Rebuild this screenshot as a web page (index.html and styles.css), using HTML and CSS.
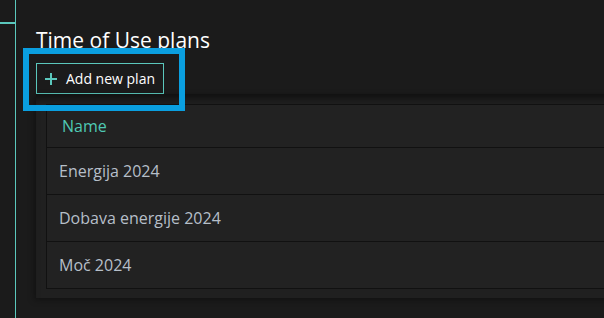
FILE: index.html
```html
<!DOCTYPE html>
<html>
<head>
<meta charset="utf-8">
<link rel="stylesheet" href="styles.css">
</head>
<body>
<div class="app">
  <aside class="rail"><span class="tick"></span></aside>
  <main class="main">
    <h1 class="title">Time of Use plans</h1>
    <button class="add-btn"><svg class="plus" width="12" height="12" viewBox="0 0 12 12"><path d="M6 0V12M0 6H12" stroke="#5bc8bd" stroke-width="2" fill="none"/></svg>Add new plan</button>
    <section class="panel">
      <table class="plans">
        <thead><tr><th>Name</th></tr></thead>
        <tbody>
          <tr><td>Energija 2024</td></tr>
          <tr><td>Dobava energije 2024</td></tr>
          <tr><td>Moč 2024</td></tr>
        </tbody>
      </table>
    </section>
  </main>
</div>
<div class="highlight"></div>
</body>
</html>
```
FILE: styles.css
```css
html, body {
  margin: 0;
  padding: 0;
  background: #1b1b1b;
  overflow: hidden;
  width: 604px;
  height: 318px;
}
body {
  font-family: "Open Sans", "Noto Sans", sans-serif;
  color: #fff;
}
.app {
  display: flex;
  height: 318px;
  overflow: hidden;
}
.rail {
  width: 15px;
  flex: none;
  border-right: 1px solid #5bc8bd;
  padding-top: 22px;
}
.tick {
  display: block;
  height: 2px;
  background: #5bc8bd;
}
.main {
  flex: none;
  width: 700px;
  padding-left: 20px;
}
.title {
  margin: 27px 0 9px;
  font-size: 21px;
  font-weight: 400;
  line-height: 27px;
  color: #fff;
}
.add-btn {
  display: flex;
  align-items: center;
  height: 31px;
  box-sizing: border-box;
  padding: 0 8px 0 8px;
  background: #1b1b1b;
  border: 1px solid #5bc8bd;
  color: #fff;
  font-family: inherit;
  font-size: 14px;
  line-height: 20px;
}
.plus {
  display: block;
  margin-right: 9px;
}
.panel {
  background: #202020;
  padding: 10px 10px 9px;
  box-shadow: inset 0 9px 8px -5px rgba(0,0,0,0.55), -2px 2px 6px rgba(0,0,0,0.35);
}
.plans {
  width: 100%;
  border-collapse: collapse;
  background: #222222;
  border: 1px solid #111;
}
.plans th, .plans td {
  text-align: left;
  font-weight: 400;
  font-size: 16px;
  padding: 0 12px;
  border-bottom: 1px solid #111;
}
.plans th {
  height: 42px;
  color: #4fc9b4;
  padding-left: 15px;
}
.plans td {
  height: 46px;
  color: #b6bfc9;
}
.highlight {
  position: absolute;
  left: 23px;
  top: 48px;
  width: 162px;
  height: 63px;
  box-sizing: border-box;
  border: 6px solid #0a9fe0;
}
```
